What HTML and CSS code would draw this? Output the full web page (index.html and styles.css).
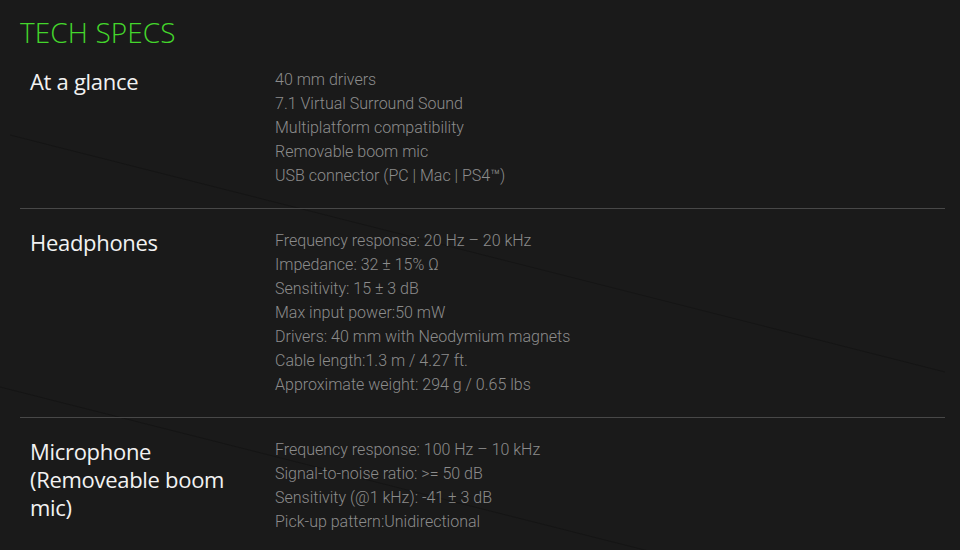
FILE: index.html
```html
<!DOCTYPE html>
<html lang="en">
<head>
<meta charset="utf-8">
<title>Tech Specs</title>
<link rel="stylesheet" href="styles.css">
</head>
<body>
<svg class="bg-lines" width="960" height="550" viewBox="0 0 960 550" aria-hidden="true">
  <line x1="10" y1="135" x2="945" y2="372" />
  <line x1="0" y1="387" x2="700" y2="564" />
</svg>
<main class="specs">
  <h1 class="title">TECH SPECS</h1>
  <section class="row">
    <h2 class="label">At a glance</h2>
    <ul class="values">
      <li>40 mm drivers</li>
      <li>7.1 Virtual Surround Sound</li>
      <li>Multiplatform compatibility</li>
      <li>Removable boom mic</li>
      <li>USB connector (PC | Mac | PS4™)</li>
    </ul>
  </section>
  <section class="row">
    <h2 class="label">Headphones</h2>
    <ul class="values">
      <li>Frequency response: 20 Hz – 20 kHz</li>
      <li>Impedance: 32 ± 15% Ω</li>
      <li>Sensitivity: 15 ± 3 dB</li>
      <li>Max input power:50 mW</li>
      <li>Drivers: 40 mm with Neodymium magnets</li>
      <li>Cable length:1.3 m / 4.27 ft.</li>
      <li>Approximate weight: 294 g / 0.65 lbs</li>
    </ul>
  </section>
  <section class="row">
    <h2 class="label">Microphone (Removeable boom mic)</h2>
    <ul class="values">
      <li>Frequency response: 100 Hz – 10 kHz</li>
      <li>Signal-to-noise ratio: &gt;= 50 dB</li>
      <li>Sensitivity (@1 kHz): -41 ± 3 dB</li>
      <li>Pick-up pattern:Unidirectional</li>
    </ul>
  </section>
</main>
</body>
</html>
```
FILE: styles.css
```css
html, body {
  margin: 0;
  padding: 0;
  background: #1a1a1a;
  overflow: hidden;
}
body {
  width: 960px;
  height: 550px;
  position: relative;
}
.bg-lines {
  position: absolute;
  left: 0;
  top: 0;
  z-index: 0;
}
.bg-lines line {
  stroke: #151515;
  stroke-width: 1;
}
.specs {
  position: relative;
  z-index: 1;
  width: 925px;
  margin-left: 20px;
  padding-top: 15px;
}
.title {
  margin: 0;
  font-family: "Open Sans", sans-serif;
  font-weight: 300;
  font-size: 28px;
  line-height: 34px;
  letter-spacing: 0.1px;
  color: #44d62c;
}
.row {
  display: grid;
  grid-template-columns: 245px 1fr;
  padding: 18px 0 20px 10px;
  border-bottom: 1px solid #484848;
}
.row:last-child {
  border-bottom: none;
}
.row + .row {
  padding-top: 19px;
}
.label {
  margin: 0;
  font-family: "Open Sans", sans-serif;
  font-weight: 400;
  font-size: 22px;
  line-height: 28px;
  color: #f2f2f2;
  max-width: 210px;
  letter-spacing: -0.3px;
}
.values {
  list-style: none;
  margin: 0;
  padding: 1px 0 0;
  font-family: Roboto, sans-serif;
  font-weight: 300;
  font-size: 16px;
  line-height: 24px;
  color: #8c8c8c;
}
```
